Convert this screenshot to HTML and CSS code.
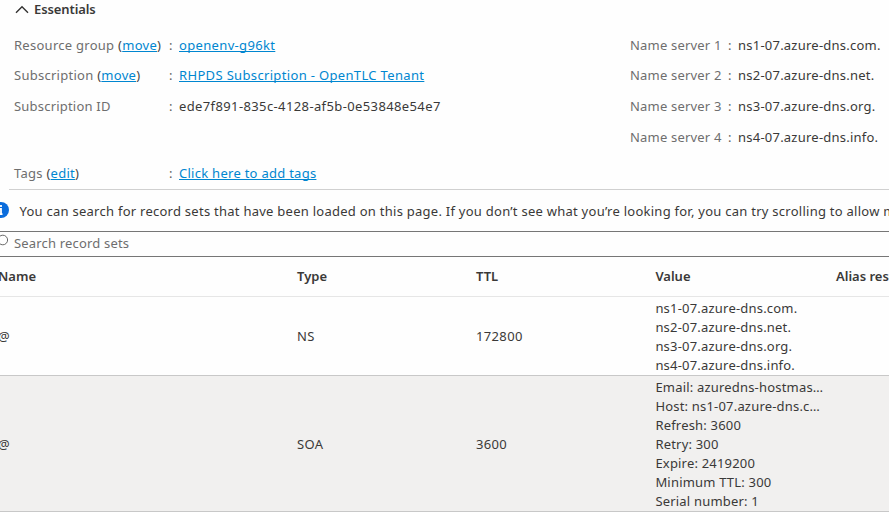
FILE: index.html
```
<!DOCTYPE html>
<html lang="en">
<head>
<meta charset="utf-8">
<title>DNS zone</title>
<link rel="stylesheet" href="styles.css">
</head>
<body>
<main class="page">
  <section class="essentials">
    <h2 class="heading"><svg class="chevron" width="14" height="9" viewBox="0 0 14 9"><path d="M1 7.7 7 1.7 13 7.7"/></svg><span>Essentials</span></h2>
    <div class="properties">
      <dl class="column">
        <div class="property"><dt>Resource group <span class="paren">(<a href="#">move</a>)</span></dt><dd><a href="#" class="wide">openenv-g96kt</a></dd></div>
        <div class="property"><dt>Subscription <span class="paren">(<a href="#">move</a>)</span></dt><dd><a href="#" class="wide">RHPDS Subscription - OpenTLC Tenant</a></dd></div>
        <div class="property"><dt class="plain">Subscription ID</dt><dd><span class="guid">ede7f891-835c-4128-af5b-0e53848e54e7</span></dd></div>
      </dl>
      <dl class="column servers">
        <div class="property"><dt>Name server 1</dt><dd>ns1-07.azure-dns.com.</dd></div>
        <div class="property"><dt>Name server 2</dt><dd>ns2-07.azure-dns.net.</dd></div>
        <div class="property"><dt>Name server 3</dt><dd>ns3-07.azure-dns.org.</dd></div>
        <div class="property"><dt>Name server 4</dt><dd>ns4-07.azure-dns.info.</dd></div>
      </dl>
    </div>
    <dl class="tags">
      <div class="property"><dt>Tags <span class="paren">(<a href="#">edit</a>)</span></dt><dd><a href="#">Click here to add tags</a></dd></div>
    </dl>
  </section>
  <div class="notice"><svg class="info" width="16" height="16" viewBox="0 0 16 16"><circle cx="8" cy="8" r="8" fill="#0a6cdc"/><path d="M8 3v2M6.5 7H8V12.5M6.5 12.2H9.5" stroke="#fff" stroke-width="1.8" fill="none"/></svg><p>You can search for record sets that have been loaded on this page. If you don’t see what you’re looking for, you can try scrolling to allow more</p></div>
  <div class="search"><svg class="lens" width="16" height="16" viewBox="0 0 16 16"><circle cx="10.8" cy="6" r="4.8"/><path d="M7.4 9.4 1.8 15"/></svg><span class="placeholder">Search record sets</span></div>
  <div class="table">
    <div class="row head"><div>Name</div><div>Type</div><div>TTL</div><div>Value</div><div>Alias resource</div></div>
    <div class="row ns"><div>@</div><div>NS</div><div>172800</div>
      <div class="values"><p>ns1-07.azure-dns.com.</p><p>ns2-07.azure-dns.net.</p><p>ns3-07.azure-dns.org.</p><p>ns4-07.azure-dns.info.</p></div></div>
    <div class="row soa"><div>@</div><div>SOA</div><div>3600</div>
      <div class="values"><p>Email: azuredns-hostmas…</p><p>Host: ns1-07.azure-dns.c…</p><p>Refresh: 3600</p><p>Retry: 300</p><p>Expire: 2419200</p><p>Minimum TTL: 300</p><p>Serial number: 1</p></div></div>
  </div>
</main>
</body>
</html>
```
FILE: styles.css
```
* { box-sizing: border-box; }
body { margin: 0; background: #fefefe; color: #3a3938; font: 13px/19px "Noto Sans", "Open Sans", sans-serif; letter-spacing: .23px; overflow: hidden; }
h2, p, dl, dd { margin: 0; }
a { color: #0086d0; text-decoration: underline; text-decoration-thickness: 1px; text-underline-offset: 1px; text-decoration-skip-ink: none; letter-spacing: .27px; }
.page { width: 889px; height: 512px; overflow: hidden; white-space: nowrap; }
.essentials { height: 190px; margin-left: 9px; padding-left: 5px; border-bottom: 1px solid #d0d0d0; }
.heading { display: flex; align-items: center; gap: 5px; height: 19px; padding-left: 1px; font-size: 13px; font-weight: 600; letter-spacing: -.1px; }
.chevron { fill: none; stroke: #323130; stroke-width: 1.4; }
.properties { display: flex; justify-content: space-between; padding-top: 11px; height: 134px; }
.property { display: flex; height: 31px; line-height: 31px; }
.column .property:nth-child(-n+2) { height: 30px; line-height: 30px; }
.column .property:nth-child(n+3) { line-height: 32px; }
.column { width: 616px; }
.servers { width: 259px; }
dt { width: 155px; color: #6e6e6e; letter-spacing: .27px; }
.plain { letter-spacing: .2px; }
.paren { color: #484644; }
dd::before { content: ":"; display: inline-block; width: 10px; color: #605e5c; }
.wide { letter-spacing: .34px; }
.guid { letter-spacing: .38px; }
.servers dt { width: 98px; letter-spacing: .19px; }
.tags { padding-top: 5px; }
.notice { display: flex; align-items: center; gap: 10.5px; height: 41px; margin-left: -7px; }
.notice p { padding-top: 2px; letter-spacing: .258px; }
.info { flex: none; margin-top: -1px; }
.search { display: flex; align-items: center; gap: 6px; height: 26px; margin-left: -8px; border: solid #767676; border-width: 1px 0; color: #6e6e6e; letter-spacing: .18px; }
.placeholder { padding-bottom: 2px; }
.lens { flex: none; fill: none; stroke: #696969; stroke-width: 1; margin-top: -4px; }
.row { display: grid; grid-template-columns: 299px 179px 179.4px 180.6px 180px; align-items: center; margin-left: -2px; border-bottom: 1px solid #c8c8c8; letter-spacing: .35px; }
.head { height: 40px; font-weight: 600; border-bottom-color: #e6e6e6; letter-spacing: 0; }
.ns { height: 79px; }
.soa { height: 136px; background: #f1f0ef; }
.values { padding-top: 2px; letter-spacing: .2px; }
.soa .values { letter-spacing: .19px; }
.soa > div:not(.values) { padding-top: 2px; }
```
